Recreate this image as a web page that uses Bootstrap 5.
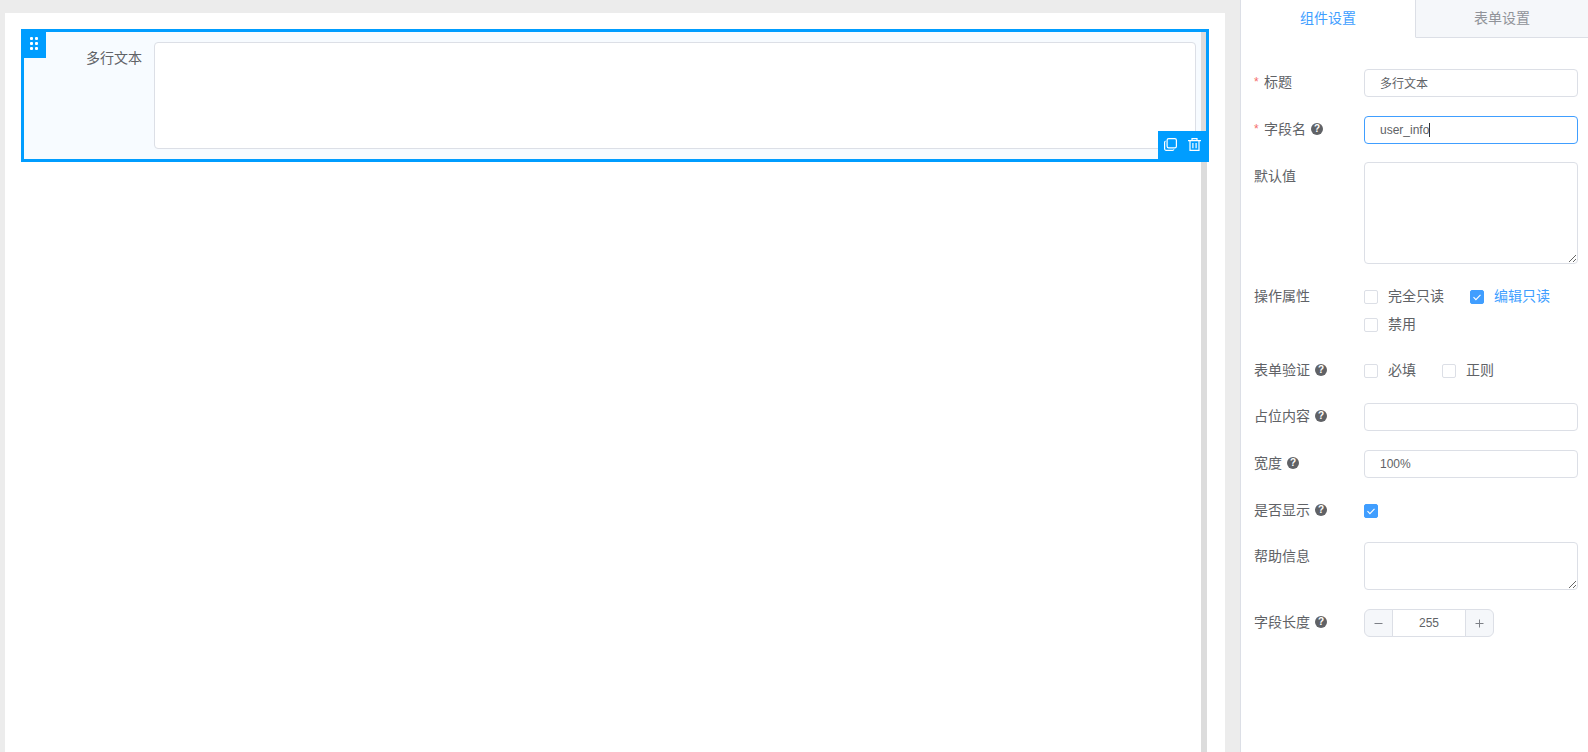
<!DOCTYPE html>
<html lang="zh-CN">
<head>
    <meta charset="UTF-8">
    <meta name="viewport" content="width=device-width, initial-scale=1.0">
    <title>表单设计器</title>
    <link href="https://cdn.jsdelivr.net/npm/bootstrap@5.3.0/dist/css/bootstrap.min.css" rel="stylesheet">
    <style>
        body {
            font-family: "Liberation Sans", "Noto Sans CJK SC", sans-serif;
            font-size: 14px;
            color: #606266;
            background-color: #ececec;
            overflow: hidden;
        }

        .canvas-area {
            width: 1240px;
            height: 752px;
            padding: 13px 15px 0 5px;
        }

        .canvas-paper {
            position: relative;
            height: 100%;
            padding: 16px;
            background-color: #fff;
        }

        /* scrollbar thumb, lies over the selected item */
        .scroll-thumb {
            position: absolute;
            top: 16px;
            bottom: 0;
            left: 1196px;
            width: 6px;
            background-color: #dcdcdc;
            z-index: 1;
        }

        .widget-item {
            position: relative;
            padding: 13px;
            background-color: #f7fbff;
        }

        .widget-item::after {
            content: "";
            position: absolute;
            inset: 0;
            border: 3px solid #009dff;
            pointer-events: none;
            z-index: 2;
        }

        .widget-label {
            width: 120px;
            padding-right: 12px;
            line-height: 32px;
            text-align: right;
            flex-shrink: 0;
        }

        .widget-area {
            height: 107px;
            resize: none;
        }

        .drag-handle {
            position: absolute;
            top: 0;
            left: 0;
            width: 25px;
            height: 29px;
            background-color: #009dff;
            z-index: 3;
        }

        .widget-actions {
            position: absolute;
            right: 0;
            bottom: 0;
            width: 51px;
            height: 31px;
            padding: 7px 0 0 6px;
            gap: 11px;
            background-color: #009dff;
            z-index: 3;
        }

        .settings-side {
            width: 348px;
            height: 752px;
            background-color: #fff;
            border-left: 1px solid #dcdfe6;
        }

        .side-tabs .nav-item:first-child {
            flex: 0 0 175px;
        }

        .side-tabs .nav-link {
            height: 38px;
            line-height: 37px;
            padding: 0;
            font-size: 14px;
            color: #909399;
            background-color: #f5f7fa;
            border-bottom: 1px solid #dcdfe6;
            border-radius: 0;
        }

        .side-tabs .nav-link.active {
            color: #409eff;
            background-color: #fff;
            border-bottom-color: #fff;
            border-right: 1px solid #dcdfe6;
        }

        .setting-form {
            padding: 31px 10px 0 13px;
        }

        .setting-row {
            display: flex;
            margin-bottom: 19px;
        }

        .setting-row.row-tight {
            margin-bottom: 18px;
        }

        .setting-row.row-tighter {
            margin-bottom: 17px;
        }

        .setting-label {
            width: 110px;
            flex-shrink: 0;
            display: flex;
            align-items: flex-start;
            line-height: 26px;
        }

        .setting-label.label-low {
            line-height: 28px;
        }

        .req-star {
            width: 10px;
            color: #f56c6c;
            font-size: 12px;
        }

        .q-tip {
            width: 12px;
            height: 12px;
            margin: 7px 0 0 5px;
            border-radius: 50%;
            background-color: #606266;
            color: #fff;
            font-size: 10px;
            font-weight: 700;
            line-height: 12px;
            text-align: center;
        }

        .setting-body {
            flex: 1;
            min-width: 0;
        }

        .form-control.fld {
            height: 28px;
            min-height: 0;
            padding: 0 15px;
            font-size: 12px;
            color: #606266;
            border-color: #dcdfe6;
            border-radius: 4px;
            box-shadow: none;
        }

        .form-control.fld.fld-cjk {
            padding-bottom: 2px;
        }

        textarea.form-control.fld {
            padding: 5px 15px;
        }

        .form-control.fld-focus {
            border-color: #409eff;
        }

        .form-control.widget-area {
            border-color: #dcdfe6;
            border-radius: 4px;
        }

        .fld-default {
            height: 102px !important;
        }

        .fld-help {
            height: 48px !important;
        }

        .fld-caret {
            position: absolute;
            top: 7px;
            left: 65px;
            width: 1px;
            height: 14px;
            background-color: #303133;
        }

        .check-group {
            display: flex;
            flex-wrap: wrap;
            column-gap: 26px;
        }

        .check-item {
            display: flex;
            align-items: center;
            height: 26px;
            margin-bottom: 2px;
            gap: 10px;
        }

        .form-check-input.check-box {
            width: 14px;
            height: 14px;
            margin: 2px 0 0;
            border-color: #dcdfe6;
            border-radius: 2px;
            box-shadow: none;
        }

        .form-check-input.check-box:checked {
            background-color: #409eff;
            border-color: #409eff;
            background-image: url("data:image/svg+xml,%3Csvg xmlns='http://www.w3.org/2000/svg' viewBox='0 0 14 14'%3E%3Cpath d='M3.5 7.2l2.4 2.4 4.6-4.8' fill='none' stroke='%23fff' stroke-width='1.1'/%3E%3C/svg%3E");
            background-size: 14px 14px;
        }

        .check-on {
            color: #409eff;
        }

        .num-box {
            width: 130px;
            height: 28px;
            flex-wrap: nowrap;
        }

        .num-box .btn {
            width: 29px;
            height: 28px;
            padding: 0;
            line-height: 24px;
            background-color: #f5f7fa;
            border-color: #dcdfe6;
        }

        .num-box .form-control {
            height: 28px;
            min-height: 0;
            padding: 0;
            font-size: 12px;
            color: #606266;
            text-align: center;
            border-color: #dcdfe6;
        }
    </style>
</head>
<body>
    <div class="d-flex">
        <div class="canvas-area">
            <div class="canvas-paper">
                <div class="widget-item d-flex">
                    <div class="drag-handle d-flex align-items-center justify-content-center">
                        <svg width="8" height="14" viewBox="0 0 8 14" fill="#fff">
                            <rect x="0" y="0" width="3" height="3" rx="1"/><rect x="5" y="0" width="3" height="3" rx="1"/>
                            <rect x="0" y="5" width="3" height="3" rx="1"/><rect x="5" y="5" width="3" height="3" rx="1"/>
                            <rect x="0" y="10" width="3" height="3" rx="1"/><rect x="5" y="10" width="3" height="3" rx="1"/>
                        </svg>
                    </div>
                    <label class="widget-label">多行文本</label>
                    <textarea class="form-control widget-area"></textarea>
                    <div class="widget-actions d-flex align-items-start">
                        <svg width="13" height="13" viewBox="0 0 13 13" fill="none" stroke="#fff" stroke-width="1.2">
                            <rect x="3.1" y="0.6" width="9.3" height="9.3" rx="1.6"/>
                            <path d="M1.6 3A1.6 1.6 0 0 0 .6 4.4v6.4A1.6 1.6 0 0 0 2.2 12.4h6.4a1.6 1.6 0 0 0 1.4-1"/>
                        </svg>
                        <svg width="13" height="13" viewBox="0 0 13 13" fill="none" stroke="#fff" stroke-width="1.2">
                            <path d="M0 2.6h13M4 2.6V.6h5v2M2 2.6v9.8h9V2.6M4.9 5v5.2M8.1 5v5.2"/>
                        </svg>
                    </div>
                </div>
                <div class="scroll-thumb"></div>
            </div>
        </div>

        <div class="settings-side">
            <ul class="nav nav-fill side-tabs">
                <li class="nav-item"><a class="nav-link active" href="#">组件设置</a></li>
                <li class="nav-item"><a class="nav-link" href="#">表单设置</a></li>
            </ul>

            <form class="setting-form">
                <div class="setting-row">
                    <div class="setting-label"><span class="req-star">*</span>标题</div>
                    <div class="setting-body"><input class="form-control fld fld-cjk" value="多行文本"></div>
                </div>
                <div class="setting-row row-tight">
                    <div class="setting-label"><span class="req-star">*</span>字段名<span class="q-tip">?</span></div>
                    <div class="setting-body position-relative">
                        <input class="form-control fld fld-focus" value="user_info">
                        <span class="fld-caret"></span>
                    </div>
                </div>
                <div class="setting-row">
                    <div class="setting-label label-low">默认值</div>
                    <div class="setting-body"><textarea class="form-control fld fld-default"></textarea></div>
                </div>
                <div class="setting-row row-tight">
                    <div class="setting-label">操作属性</div>
                    <div class="setting-body check-group">
                        <label class="check-item"><input class="form-check-input check-box" type="checkbox">完全只读</label>
                        <label class="check-item check-on"><input class="form-check-input check-box" type="checkbox" checked>编辑只读</label>
                        <label class="check-item"><input class="form-check-input check-box" type="checkbox">禁用</label>
                    </div>
                </div>
                <div class="setting-row row-tight">
                    <div class="setting-label">表单验证<span class="q-tip">?</span></div>
                    <div class="setting-body check-group">
                        <label class="check-item"><input class="form-check-input check-box" type="checkbox">必填</label>
                        <label class="check-item"><input class="form-check-input check-box" type="checkbox">正则</label>
                    </div>
                </div>
                <div class="setting-row">
                    <div class="setting-label">占位内容<span class="q-tip">?</span></div>
                    <div class="setting-body"><input class="form-control fld"></div>
                </div>
                <div class="setting-row">
                    <div class="setting-label">宽度<span class="q-tip">?</span></div>
                    <div class="setting-body"><input class="form-control fld" value="100%"></div>
                </div>
                <div class="setting-row row-tighter">
                    <div class="setting-label">是否显示<span class="q-tip">?</span></div>
                    <div class="setting-body check-group">
                        <label class="check-item"><input class="form-check-input check-box" type="checkbox" checked></label>
                    </div>
                </div>
                <div class="setting-row">
                    <div class="setting-label label-low">帮助信息</div>
                    <div class="setting-body"><textarea class="form-control fld fld-help"></textarea></div>
                </div>
                <div class="setting-row">
                    <div class="setting-label">字段长度<span class="q-tip">?</span></div>
                    <div class="setting-body">
                        <div class="input-group num-box">
                            <button class="btn" type="button">
                                <svg width="9" height="9" viewBox="0 0 9 9" stroke="#7d8087"><path d="M.5 4.5h8"/></svg>
                            </button>
                            <input class="form-control" value="255">
                            <button class="btn" type="button">
                                <svg width="9" height="9" viewBox="0 0 9 9" stroke="#7d8087"><path d="M.5 4.5h8M4.5.5v8"/></svg>
                            </button>
                        </div>
                    </div>
                </div>
            </form>
        </div>
    </div>

    <script src="https://cdn.jsdelivr.net/npm/bootstrap@5.3.0/dist/js/bootstrap.bundle.min.js"></script>
</body>
</html>
